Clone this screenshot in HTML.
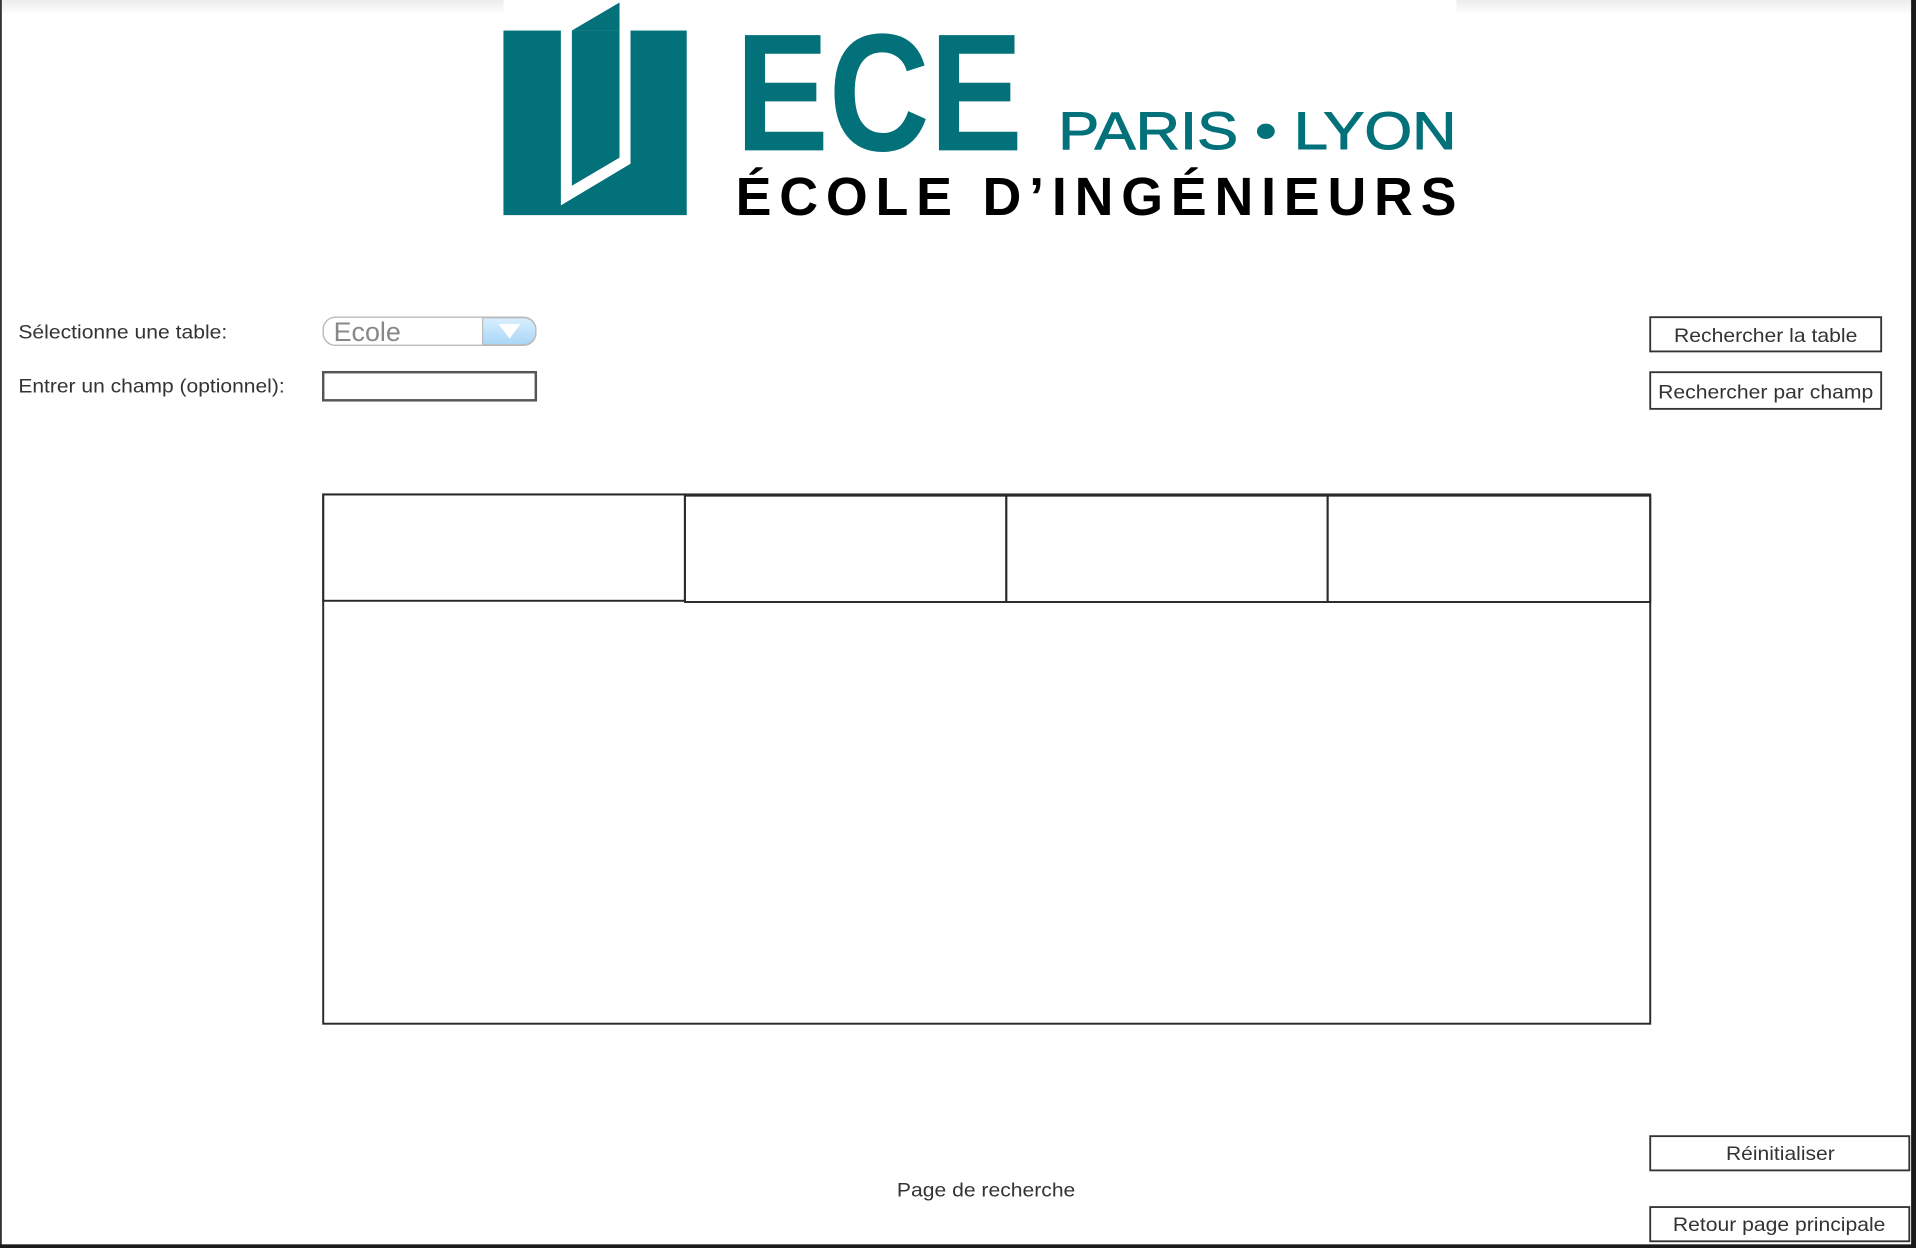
<!DOCTYPE html>
<html><head><meta charset="utf-8"><style>
html,body{margin:0;padding:0;background:#fff;overflow:hidden}
svg{display:block}
text{font-family:"Liberation Sans",Arial,sans-serif}
</style></head><body>
<svg width="1916" height="1248" viewBox="0 0 1568 1021" preserveAspectRatio="none" xmlns="http://www.w3.org/2000/svg">
<defs>
<linearGradient id="top" x1="0" y1="0" x2="0" y2="1"><stop offset="0" stop-color="#ececec"/><stop offset="1" stop-color="#fff"/></linearGradient>
<linearGradient id="btn" x1="0" y1="0" x2="0" y2="1"><stop offset="0" stop-color="#d9efff"/><stop offset="1" stop-color="#a9d6f7"/></linearGradient>
</defs>
<rect width="1568" height="1021" fill="#fff"/>
<rect x="0" y="0" width="412" height="12" fill="url(#top)"/>
<rect x="1192" y="0" width="376" height="12" fill="url(#top)"/>
<rect x="0" y="0" width="1.5" height="1021" fill="#333"/>
<rect x="1564" y="0" width="4" height="1021" fill="#1a1a1a"/>
<rect x="0" y="1018" width="1568" height="3" fill="#1a1a1a"/>
<rect x="412" y="25" width="150" height="151" fill="#02717a"/>
<polygon points="459,25 468,25 468,152 507,129 507,25 516,25 516,134 459,168" fill="#fff"/>
<polygon points="468,25 507,2 507,25" fill="#02717a"/>
<text x="602" y="123" font-size="137" font-weight="bold" fill="#02717a" textLength="235" lengthAdjust="spacingAndGlyphs">ECE</text>
<text x="866" y="122" font-size="43" fill="#02717a" stroke="#02717a" stroke-width="0.8" textLength="326" lengthAdjust="spacingAndGlyphs">PARIS • LYON</text>
<text x="602" y="176" font-size="44" font-weight="bold" fill="#000" textLength="590" lengthAdjust="spacing">ÉCOLE D’INGÉNIEURS</text>
<text x="15" y="277" font-size="15.5" fill="#333" textLength="171" lengthAdjust="spacingAndGlyphs">Sélectionne une table:</text>
<text x="15" y="321" font-size="15.5" fill="#333" textLength="218" lengthAdjust="spacingAndGlyphs">Entrer un champ (optionnel):</text>
<rect x="264.5" y="259.5" width="174" height="23" rx="10" fill="#fff" stroke="#bbb" stroke-width="1.2"/>
<path d="M395,260 H429 A10,10 0 0 1 438.5,270 V272 A10,10 0 0 1 429,282 H395 Z" fill="url(#btn)" stroke="#bbb" stroke-width="1"/>
<polygon points="408,265 426,265 417,277" fill="#fff"/>
<text x="273" y="279" font-size="22" fill="#888">Ecole</text>
<rect x="264.5" y="304.5" width="174" height="23" fill="#fff" stroke="#555" stroke-width="2"/>
<rect x="1350.5" y="259.5" width="189" height="28" fill="#fff" stroke="#333" stroke-width="1.5"/>
<text x="1445" y="280" font-size="15.5" fill="#333" text-anchor="middle" textLength="150" lengthAdjust="spacingAndGlyphs">Rechercher la table</text>
<rect x="1350.5" y="304.5" width="189" height="30" fill="#fff" stroke="#333" stroke-width="1.5"/>
<text x="1445" y="326" font-size="15.5" fill="#333" text-anchor="middle" textLength="176" lengthAdjust="spacingAndGlyphs">Rechercher par champ</text>
<rect x="1350.5" y="929.5" width="212" height="28" fill="#fff" stroke="#333" stroke-width="1.5"/>
<text x="1457" y="949" font-size="15.5" fill="#333" text-anchor="middle" textLength="89" lengthAdjust="spacingAndGlyphs">Réinitialiser</text>
<rect x="1350.5" y="987.5" width="212" height="28" fill="#fff" stroke="#333" stroke-width="1.5"/>
<text x="1456" y="1007" font-size="15.5" fill="#333" text-anchor="middle" textLength="174" lengthAdjust="spacingAndGlyphs">Retour page principale</text>
<g fill="none" stroke="#2a2a2a" stroke-width="1.6">
<rect x="264.5" y="404.5" width="1086" height="433"/>
<rect x="264.5" y="404.5" width="296" height="87"/>
<rect x="560.5" y="405.5" width="263" height="87"/>
<rect x="823.5" y="405.5" width="263" height="87"/>
<rect x="1086.5" y="405.5" width="264" height="87"/>
</g>
<text x="807" y="979" font-size="15.5" fill="#333" text-anchor="middle" textLength="146" lengthAdjust="spacingAndGlyphs">Page de recherche</text>
</svg>
</body></html>
